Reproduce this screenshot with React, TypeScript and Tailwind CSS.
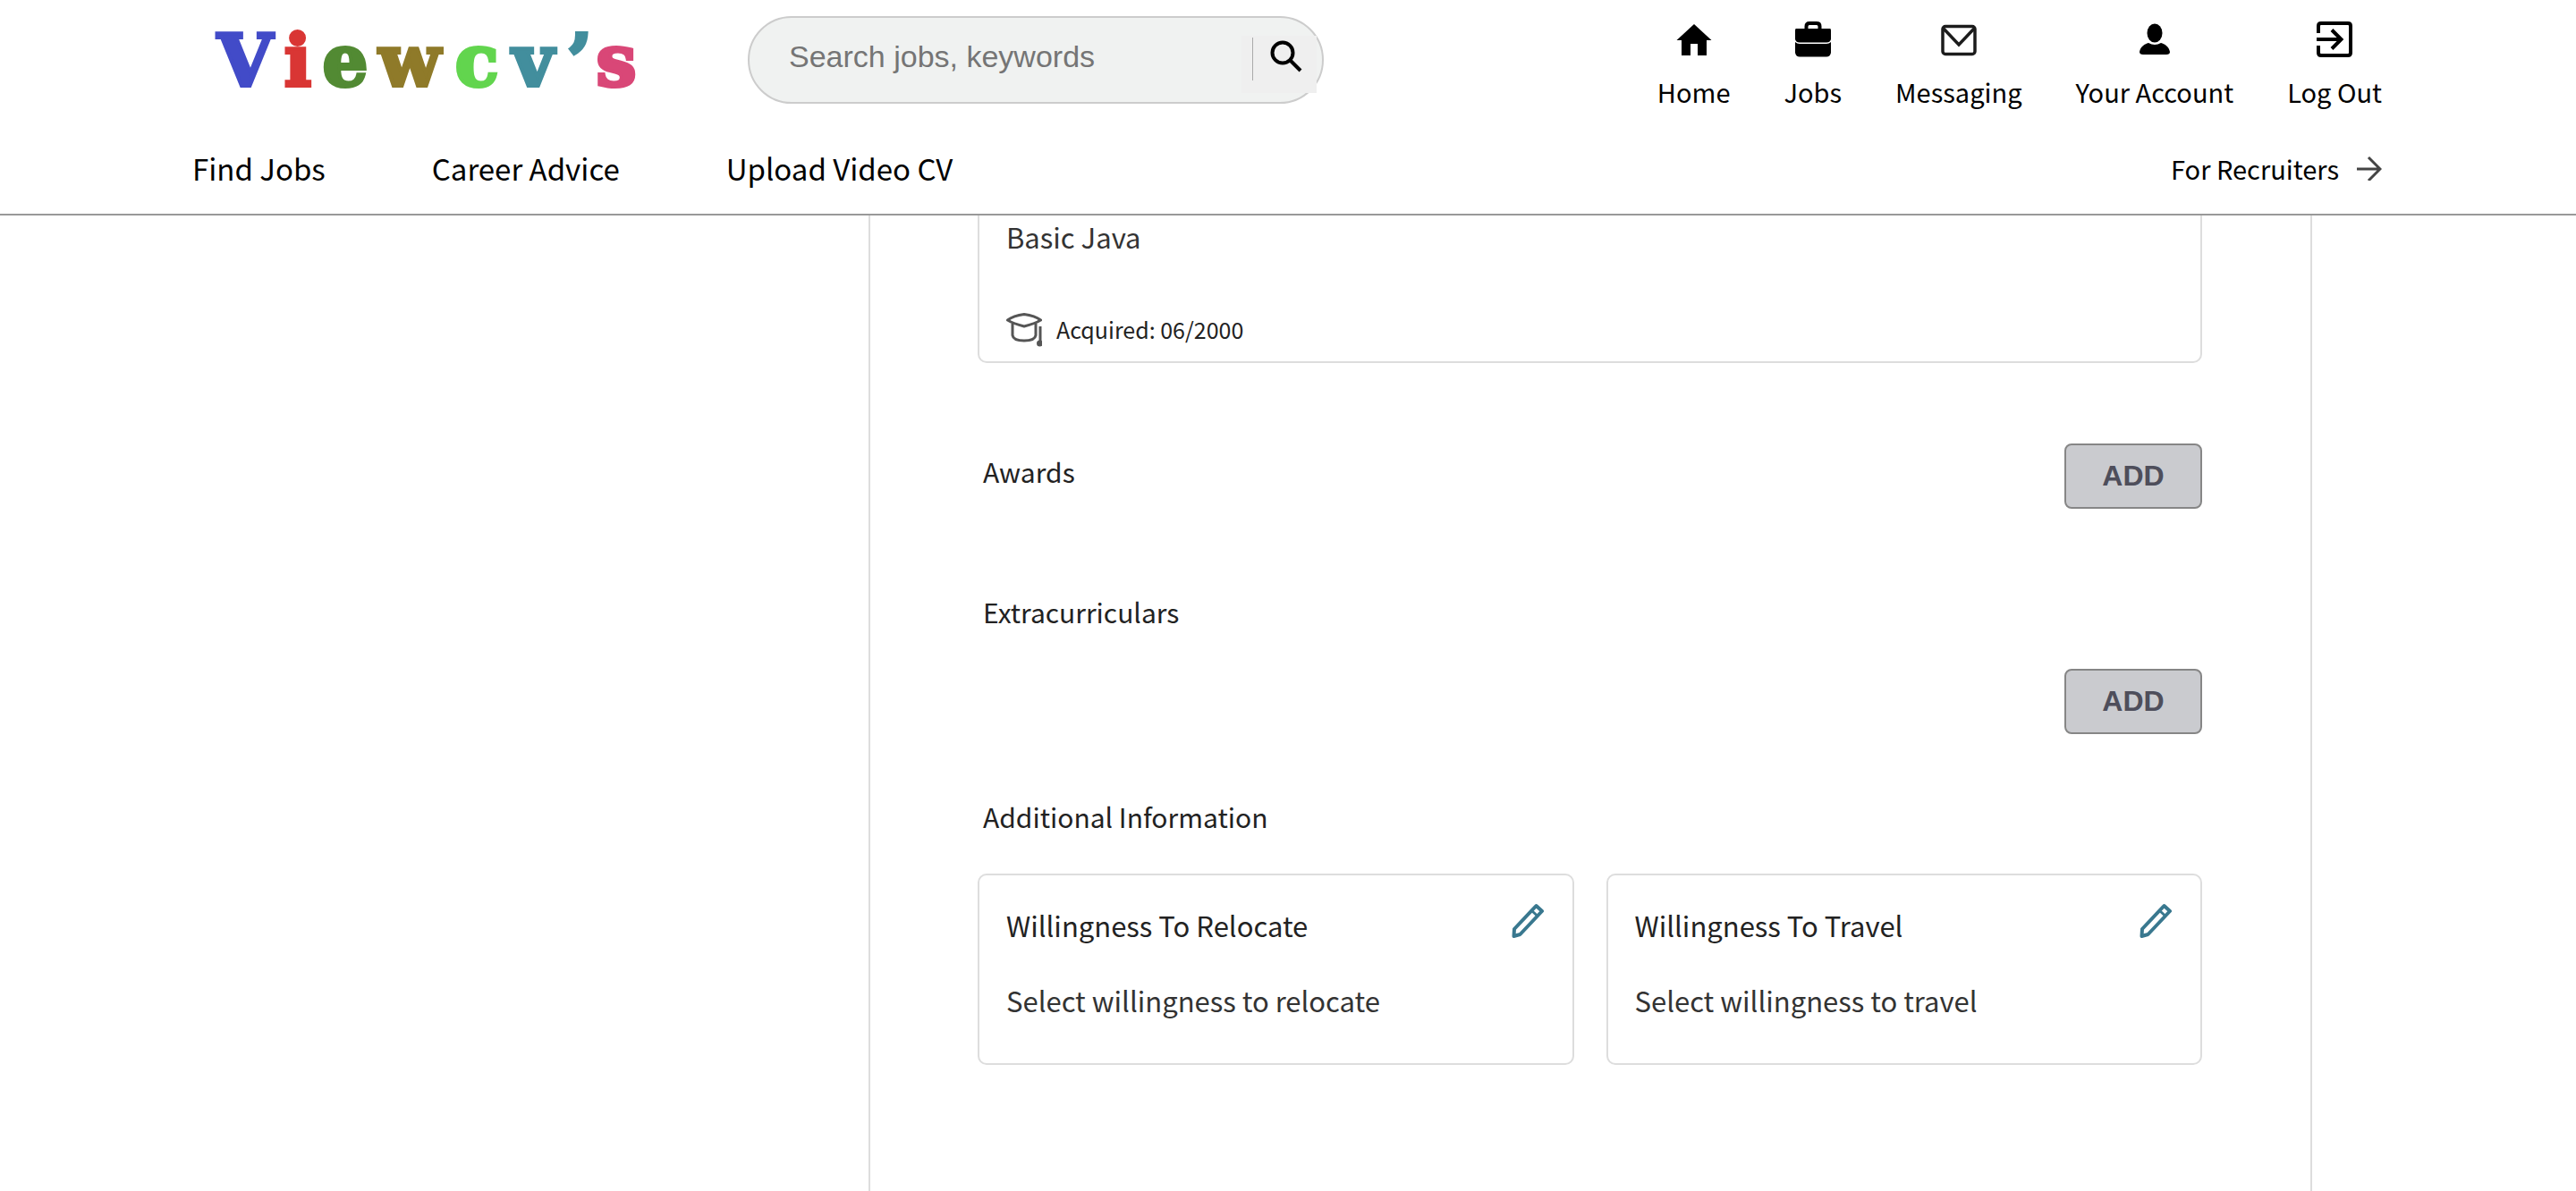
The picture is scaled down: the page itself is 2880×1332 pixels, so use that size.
import React from "react";

const LOGO: { ch: string; x: number; fill: string }[] = [
  { ch: "V", x: 39, fill: "#424bc8" },
  { ch: "i", x: 98, fill: "#d93634" },
  { ch: "e", x: 151, fill: "#528a33" },
  { ch: "w", x: 223, fill: "#8f7a29" },
  { ch: "c", x: 298, fill: "#62d54e" },
  { ch: "v", x: 361, fill: "#428e9d" },
  { ch: "’", x: 413, fill: "#428e9d" },
  { ch: "s", x: 454, fill: "#d94777" },
];

function Logo() {
  return (
    <svg viewBox="0 0 480 112" className="h-28 w-[480px]" role="img" aria-label="Viewcv's">
      {LOGO.map((l) => (
        <text
          key={l.x}
          x={l.x}
          y={80}
          textAnchor="middle"
          fontFamily="DejaVu Serif, serif"
          fontWeight={700}
          fontSize={80}
          fill={l.fill}
          stroke={l.fill}
          strokeWidth={4}
        >
          {l.ch}
        </text>
      ))}
    </svg>
  );
}

function HomeIcon() {
  return (
    <svg viewBox="0 0 40 40" className="size-10">
      <path d="M20 3 39.500 21H34V38H24V25H16V38H6V21H0.500Z" fill="#000" />
    </svg>
  );
}

function BriefcaseIcon() {
  return (
    <svg viewBox="0 0 40 40" className="size-10">
      <path d="M12.500 10V5.500Q12.500 2 16 2H24Q27.500 2 27.500 5.500V10" fill="none" stroke="#000" strokeWidth={4} />
      <path d="M1 8H39Q40 8 40 10V20Q39 23.500 35 23.500H5Q1 23.500 0 20V10Q0 8 1 8Z" fill="#000" />
      <path d="M0 23Q2 25 5 25H35Q38 25 40 23V35Q39 39.500 35 39.500H5Q1 39.500 0 35Z" fill="#000" />
    </svg>
  );
}

function MailIcon() {
  return (
    <svg viewBox="0 0 40 40" className="size-10" fill="none" stroke="#1c1c1c" strokeWidth={3.5}>
      <rect x={2} y={5.5} width={36} height={31} rx={3} />
      <path d="M2 7 20 26 38 7" />
    </svg>
  );
}

function PersonIcon() {
  return (
    <svg viewBox="0 0 40 40" className="size-10">
      <ellipse cx={20} cy={13} rx={8.5} ry={10.5} />
      <path d="M3 34C4 28 9 25 13 24Q20 28 27 24C31 25 36 28 37 34Q37 37 33 37H7Q3 37 3 34Z" />
    </svg>
  );
}

function ExitIcon() {
  return (
    <svg viewBox="0 0 40 40" className="size-10" fill="none" stroke="#000" strokeWidth={4}>
      <path d="M2 13V5Q2 2 5 2H35Q38 2 38 5V35Q38 38 35 38H5Q2 38 2 35V27" />
      <path d="M0 20H27M17 9.500 27.500 20 17 30.500" />
    </svg>
  );
}

function SearchIcon() {
  return (
    <svg viewBox="0 0 36 36" className="size-9" fill="none" stroke="#000" strokeWidth={4}>
      <circle cx={14} cy={14} r={11.5} />
      <path d="M22 22 34 34" />
    </svg>
  );
}

function ArrowIcon() {
  return (
    <svg viewBox="0 0 28 28" className="size-7" fill="none" stroke="#444" strokeWidth={3}>
      <path d="M0 15H26M13 2 26 15 13 28" />
    </svg>
  );
}

function CapIcon() {
  return (
    <svg viewBox="0 0 40 40" className="size-10" fill="none" stroke="#555" strokeWidth={3} strokeLinejoin="round">
      <path d="M1.500 10Q8 5 20 3.500Q32 5 38.500 10Q32 14 20 17Q8 14 1.500 10Z" />
      <path d="M7 14V27Q8 33 20 33T33 27V14" />
      <path d="M38 17V33" />
      <circle cx={37.5} cy={36} r={2} fill="#555" />
    </svg>
  );
}

function PencilIcon() {
  return (
    <svg viewBox="0 0 40 40" className="size-10" fill="none" stroke="#39788f" strokeWidth={4} strokeLinejoin="round">
      <path d="M29.500 4 36 10 11.500 36 4.500 38 5 30Z" />
      <path d="M24.500 9.500 31 15.500" strokeWidth={3} />
    </svg>
  );
}

const TOP_NAV = [
  { label: "Home", Icon: HomeIcon },
  { label: "Jobs", Icon: BriefcaseIcon },
  { label: "Messaging", Icon: MailIcon },
  { label: "Your Account", Icon: PersonIcon },
  { label: "Log Out", Icon: ExitIcon },
];

function Header() {
  return (
    <header className="border-b-2 border-[#999] pr-[217px] pl-[215px] text-black">
      <div className="flex h-[144px] items-start justify-between">
        <div className="flex items-start">
          <a href="#home" className="mt-4 ml-5">
            <Logo />
          </a>
          <form
            className="mt-[18px] ml-[121px] flex h-[98px] w-[644px] items-start rounded-full border-2 border-[#ccc] bg-[#f0f2f1] pr-1.5"
            onSubmit={(e) => e.preventDefault()}
          >
            <input
              type="text"
              aria-label="Search jobs, keywords"
              placeholder="Search jobs, keywords"
              className="h-[86px] min-w-0 flex-1 bg-transparent pl-11 font-['Liberation_Sans',sans-serif] text-[34px] placeholder:text-[#757575] focus:outline-none"
            />
            <button type="submit" aria-label="Search" className="mt-5 flex h-16 w-[84px] items-start bg-[#efefef] pt-0.5 pl-3">
              <span className="h-12 w-px bg-[#aaa]" />
              <span className="mt-[3px] ml-[19px]">
                <SearchIcon />
              </span>
            </button>
          </form>
        </div>
        <nav className="mt-6 flex gap-[60px]">
          {TOP_NAV.map(({ label, Icon }) => (
            <a key={label} href="#" className="flex flex-col items-center gap-[18px] text-[29px] leading-10 whitespace-nowrap">
              <Icon />
              {label}
            </a>
          ))}
        </nav>
      </div>
      <div className="flex h-[95px] items-start justify-between pt-6 leading-10 whitespace-nowrap">
        <nav className="flex gap-[119px] text-[33px]">
          <a href="#find">Find Jobs</a>
          <a href="#advice">Career Advice</a>
          <a href="#upload">Upload Video CV</a>
        </nav>
        <a href="#recruiters" className="flex items-center gap-5 text-[29px]">
          For Recruiters
          <ArrowIcon />
        </a>
      </div>
    </header>
  );
}

function AddButton({ label }: { label: string }) {
  return (
    <button
      type="button"
      aria-label={label}
      className="h-[73px] w-[154px] rounded-lg border-2 border-[#868686] bg-[#cacbcf] pb-0.5 font-['Liberation_Sans',sans-serif] text-[32px] font-bold text-[#4e4e5b]"
    >
      ADD
    </button>
  );
}

function PreferenceCard({ title, text }: { title: string; text: string }) {
  return (
    <article className="rounded-[10px] border-2 border-[#ddd] px-[30px] pt-[30px] pb-[50px] leading-10">
      <div className="flex items-start justify-between">
        <h3 className="pt-1.5 text-[31px] text-[#222]">{title}</h3>
        <button type="button" aria-label={`Edit ${title}`}>
          <PencilIcon />
        </button>
      </div>
      <p className="mt-11 text-[31px] text-[#333]">{text}</p>
    </article>
  );
}

export default function App() {
  return (
    <div className="flex min-h-screen flex-col bg-white font-['Noto_Sans_CJK_JP',sans-serif]">
      <Header />
      <main className="mr-[295px] ml-[971px] flex-1 border-x-2 border-[#ddd] pr-[121px] pl-[120px]">
        <article className="rounded-b-[10px] border-2 border-t-0 border-[#ddd] px-[30px] pb-4">
          <p className="pt-1 text-[31px] leading-10 text-[#333]">Basic Java</p>
          <div className="mt-[63px] flex items-center gap-4 text-[25px] leading-10 text-[#222]">
            <CapIcon />
            Acquired: 06/2000
          </div>
        </article>
        <section className="mt-[90px] flex items-start justify-between">
          <h2 className="pt-[11px] pl-1.5 text-[30px] leading-10 text-[#222]">Awards</h2>
          <AddButton label="Add award" />
        </section>
        <section className="mt-[95px]">
          <h2 className="pl-1.5 text-[30px] leading-10 text-[#222]">Extracurriculars</h2>
          <div className="mt-11 flex justify-end">
            <AddButton label="Add extracurricular" />
          </div>
        </section>
        <section className="mt-[72px]">
          <h2 className="pl-1.5 text-[30px] leading-10 text-[#222]">Additional Information</h2>
          <div className="mt-11 grid grid-cols-2 gap-9">
            <PreferenceCard title="Willingness To Relocate" text="Select willingness to relocate" />
            <PreferenceCard title="Willingness To Travel" text="Select willingness to travel" />
          </div>
        </section>
      </main>
    </div>
  );
}
